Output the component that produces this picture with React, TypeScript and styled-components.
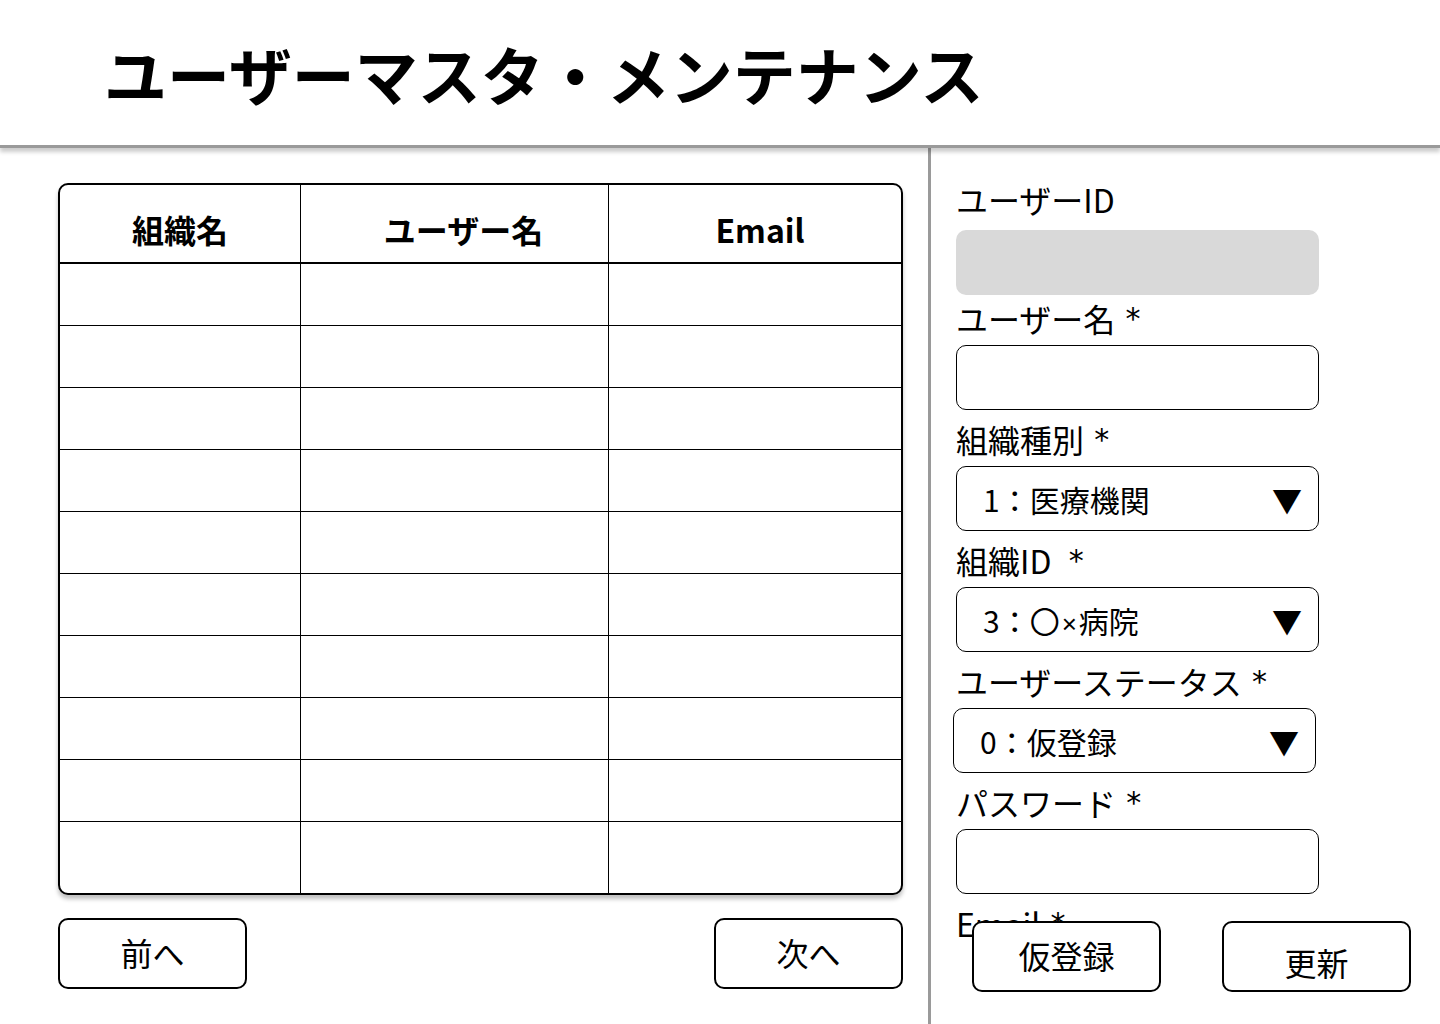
import React from 'react';
import styled, { createGlobalStyle } from 'styled-components';

const GlobalStyle = createGlobalStyle`
  html, body {
    margin: 0;
    padding: 0;
    background: #ffffff;
  }
  body {
    font-family: "Noto Sans CJK JP", "Noto Sans", sans-serif;
    color: #000000;
  }
  * {
    box-sizing: border-box;
  }
`;

const Page = styled.div`
  width: 1440px;
  height: 1024px;
  display: flex;
  flex-direction: column;
  overflow: hidden;
`;

const Header = styled.header`
  position: relative;
  z-index: 1;
  height: 148px;
  flex-shrink: 0;
  display: flex;
  align-items: center;
  padding: 0 0 0 104px;
  background: #ffffff;
  border-bottom: 3px solid #9a9a9a;
  box-shadow: 0 4px 4px rgba(0, 0, 0, 0.2);
`;

const Title = styled.h1`
  margin: 0;
  font-size: 63px;
  font-weight: 700;
  line-height: 1;
`;

const Main = styled.main`
  flex: 1;
  display: flex;
`;

const ListPane = styled.section`
  width: 931px;
  flex-shrink: 0;
  padding: 35px 0 0 58px;
  border-right: 3px solid #9a9a9a;
`;

const TableBox = styled.div`
  width: 845px;
  height: 712px;
  display: flex;
  flex-direction: column;
  border: 2px solid #000000;
  border-radius: 10px;
  overflow: hidden;
  background: #ffffff;
  box-shadow: 0 4px 4px rgba(0, 0, 0, 0.25);
`;

const Row = styled.div<{ $head?: boolean; $last?: boolean }>`
  display: grid;
  grid-template-columns: 241px 308px 1fr;
  height: ${(p) => (p.$head ? '79px' : '62px')};
  flex: ${(p) => (p.$last ? '1' : 'none')};
  border-bottom: ${(p) => (p.$last ? 'none' : p.$head ? '2px solid #000000' : '1px solid #000000')};
`;

const Cell = styled.div<{ $head?: boolean; $dx?: number }>`
  display: flex;
  align-items: center;
  justify-content: center;
  border-right: 1px solid #000000;
  font-size: 32px;
  font-weight: ${(p) => (p.$head ? 700 : 400)};
  padding-top: ${(p) => (p.$head ? '11px' : '0')};
  padding-left: ${(p) => (p.$dx ? p.$dx * 2 : 0)}px;

  &:last-child {
    border-right: none;
  }
`;

const Pager = styled.div`
  width: 845px;
  margin-top: 23px;
  display: flex;
  justify-content: space-between;
`;

const Button = styled.button<{ $drop?: number }>`
  width: 189px;
  height: 71px;
  border: 2px solid #000000;
  border-radius: 10px;
  background: #ffffff;
  color: #000000;
  font-family: "Noto Sans CJK JP", sans-serif;
  font-size: 32px;
  font-weight: 400;
  line-height: 1;
  padding: ${(p) => (p.$drop ? `${p.$drop}px 0 0` : '0 0 4px')};
  cursor: pointer;
`;

const FormPane = styled.section`
  position: relative;
  flex: 1;
  padding: 31px 0 0 25px;
`;

const Field = styled.div<{ $inner?: number; $after?: number }>`
  display: flex;
  flex-direction: column;
  gap: ${(p) => p.$inner ?? 7}px;
  margin-bottom: ${(p) => p.$after ?? 9}px;
`;

const Label = styled.label`
  font-size: 32px;
  line-height: 40px;
  height: 40px;
  white-space: pre;
`;

const Star = styled.span`
  font-family: "DejaVu Sans", sans-serif;
  font-size: 30px;
  line-height: 0;
  margin-left: 3px;
  position: relative;
  top: -3px;
`;

const TextBox = styled.div<{ $readonly?: boolean }>`
  width: 363px;
  height: 65px;
  border-radius: 10px;
  border: ${(p) => (p.$readonly ? 'none' : '1px solid #000000')};
  background: ${(p) => (p.$readonly ? '#d9d9d9' : '#ffffff')};
`;

const SelectBox = styled.div<{ $shift?: number }>`
  width: 363px;
  height: 65px;
  margin-left: ${(p) => (p.$shift ? -p.$shift : 0)}px;
  border: 1px solid #000000;
  border-radius: 10px;
  display: flex;
  align-items: center;
  justify-content: space-between;
  padding: 0 16px 0 26px;
  font-size: 30px;
`;

const Times = styled.span`
  font-family: "Liberation Sans", sans-serif;
  font-size: 26px;
  margin: 0 2px;
`;

const Arrow = styled.span`
  font-size: 30px;
  line-height: 1;
`;

const ActionBar = styled.div`
  position: absolute;
  left: 41px;
  top: 773px;
  display: flex;
  gap: 61px;
`;

const rows = Array.from({ length: 10 }, (_, i) => i);

export default function App() {
  return (
    <Page>
      <GlobalStyle />
      <Header>
        <Title>ユーザーマスタ・メンテナンス</Title>
      </Header>
      <Main>
        <ListPane>
          <TableBox>
            <Row $head>
              <Cell $head>組織名</Cell>
              <Cell $head $dx={9}>ユーザー名</Cell>
              <Cell $head $dx={5}>Email</Cell>
            </Row>
            {rows.map((i) => (
              <Row key={i} $last={i === rows.length - 1}>
                <Cell />
                <Cell />
                <Cell />
              </Row>
            ))}
          </TableBox>
          <Pager>
            <Button>前へ</Button>
            <Button>次へ</Button>
          </Pager>
        </ListPane>
        <FormPane>
          <Field $inner={11} $after={3}>
            <Label>ユーザーID</Label>
            <TextBox $readonly />
          </Field>
          <Field>
            <Label>ユーザー名 <Star>*</Star></Label>
            <TextBox />
          </Field>
          <Field>
            <Label>組織種別 <Star>*</Star></Label>
            <SelectBox>
              <span>1：医療機関</span>
              <Arrow>▼</Arrow>
            </SelectBox>
          </Field>
          <Field>
            <Label>組織ID  <Star>*</Star></Label>
            <SelectBox>
              <span>3：〇<Times>×</Times>病院</span>
              <Arrow>▼</Arrow>
            </SelectBox>
          </Field>
          <Field>
            <Label>ユーザーステータス <Star>*</Star></Label>
            <SelectBox $shift={3}>
              <span>0：仮登録</span>
              <Arrow>▼</Arrow>
            </SelectBox>
          </Field>
          <Field>
            <Label>パスワード <Star>*</Star></Label>
            <TextBox />
          </Field>
          <Field>
            <Label>Email <Star>*</Star></Label>
          </Field>
          <ActionBar>
            <Button>仮登録</Button>
            <Button $drop={10}>更新</Button>
          </ActionBar>
        </FormPane>
      </Main>
    </Page>
  );
}
